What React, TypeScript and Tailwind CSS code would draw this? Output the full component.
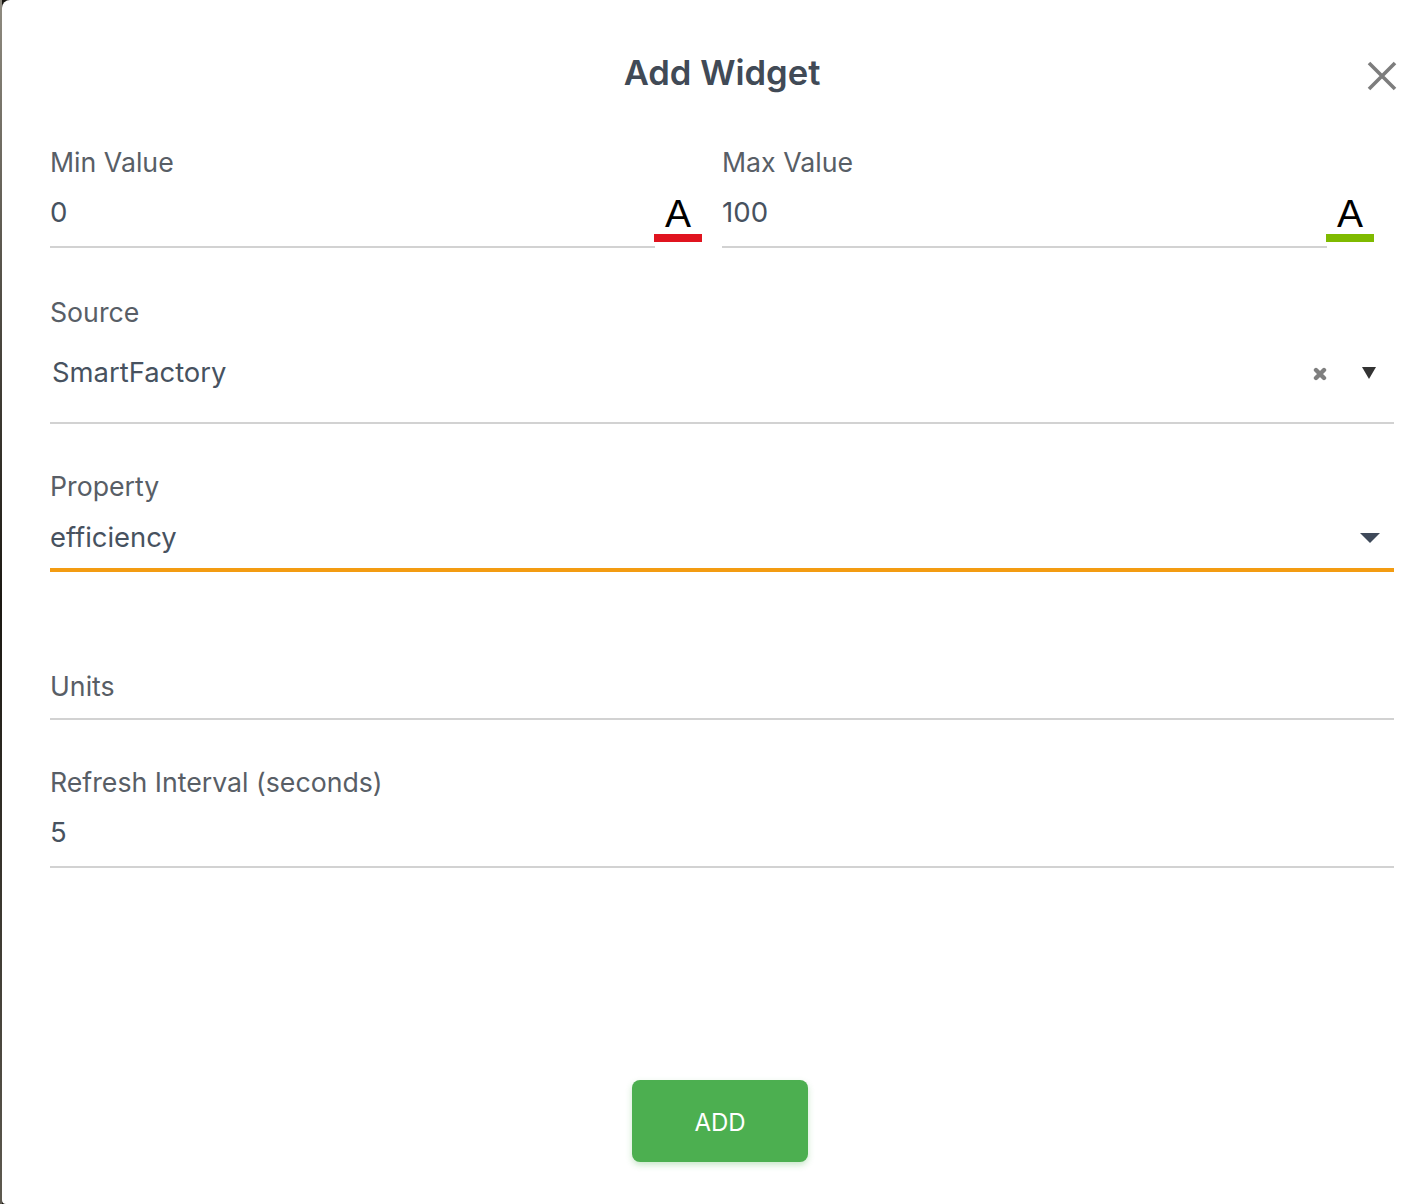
const font = "font-['Inter',sans-serif]";

const Label = ({ children }: { children: string }) => (
  <div className="text-[26.7px] leading-[30px] mb-[2px] text-[#585e66]">{children}</div>
);

const ColorField = ({ label, value, swatch }: { label: string; value: string; swatch: string }) => (
  <div className="flex flex-col">
    <Label>{label}</Label>
    <div className="flex items-end">
      <div className="flex-1 h-[69px] pt-[16px] border-b-2 border-[#d2d2d2] text-[27.6px] leading-[34px] text-[#47525f]">
        {value}
      </div>
      <div className="w-[48px] mb-[6px] -ml-px flex flex-col items-center">
        <span className="font-['Liberation_Sans',sans-serif] text-[39px] leading-[36px] mb-[2px] text-black">A</span>
        <div className={`w-full h-[8px] ${swatch}`} />
      </div>
      <div className="w-[20px]" />
    </div>
  </div>
);

export default function App() {
  return (
    <div className={`flex h-[1204px] w-[1426px] overflow-hidden bg-[#16140f] ${font}`}>
      <div className="w-[2px] bg-gradient-to-b from-[#8f8b80] via-[#1b1812] to-[#5e5a50]" />
      <div className="relative flex-1 flex flex-col bg-white rounded-tl-[8px] rounded-bl-[4px] pl-[48px] pr-[32px]">
        <button className="absolute right-[28px] top-[60px] text-[#7d7d7d]" aria-label="Close">
          <svg width="32" height="32" viewBox="0 0 32 32" fill="none" stroke="currentColor" strokeWidth="3.6">
            <path d="M3 3 L29 29 M29 3 L3 29" />
          </svg>
        </button>

        <h1 className="h-[147px] pt-[49px] text-center text-[34.6px] leading-[46px] font-semibold text-[#414a56]">
          Add Widget
        </h1>

        <div className="grid grid-cols-2 gap-0">
          <ColorField label="Min Value" value="0" swatch="bg-[#e0141f]" />
          <ColorField label="Max Value" value="100" swatch="bg-[#7fba00]" />
        </div>

        <div className="mt-[49px]">
          <Label>Source</Label>
          <div className="flex items-center h-[95px] pb-[7px] pl-[2px] pr-[18px] border-b-2 border-[#d2d2d2] text-[27.4px] text-[#47525f]">
            <span className="flex-1 leading-[34px]">SmartFactory</span>
            <svg width="14" height="14" viewBox="0 0 14 14" className="mr-[35px] mt-[3px]" stroke="#7f7f7f" strokeWidth="4.4" strokeLinecap="round">
              <path d="M3 3 L11 11 M11 3 L3 11" />
            </svg>
            <svg width="14" height="12" viewBox="0 0 14 12" className="mt-[1px]" fill="#333333">
              <path d="M0 0 H14 L7 12 Z" />
            </svg>
          </div>
        </div>

        <div className="mt-[47px]">
          <Label>Property</Label>
          <div className="flex items-center h-[69px] pt-[3px] pr-[14px] border-b-[4px] border-[#f39c12] text-[27.4px] text-[#47525f]">
            <span className="flex-1 leading-[34px]">efficiency</span>
            <svg width="20" height="10" viewBox="0 0 20 10" className="mt-[1px]" fill="#3f4a5a">
              <path d="M0 0 H20 L10 10 Z" />
            </svg>
          </div>
        </div>

        <div className="mt-[99px] h-[49px] border-b-2 border-[#d2d2d2]">
          <Label>Units</Label>
        </div>

        <div className="mt-[47px]">
          <Label>Refresh Interval (seconds)</Label>
          <div className="h-[69px] pt-[16px] border-b-2 border-[#d2d2d2] text-[27.4px] leading-[34px] text-[#47525f]">5</div>
        </div>

        <div className="mt-[212px] flex justify-center">
          <button className="w-[176px] h-[82px] pt-[3px] mr-[4px] rounded-[8px] bg-[#4caf50] text-[24px] text-white shadow-[0_3px_6px_rgba(76,175,80,0.3)]">
            ADD
          </button>
        </div>
      </div>
    </div>
  );
}
